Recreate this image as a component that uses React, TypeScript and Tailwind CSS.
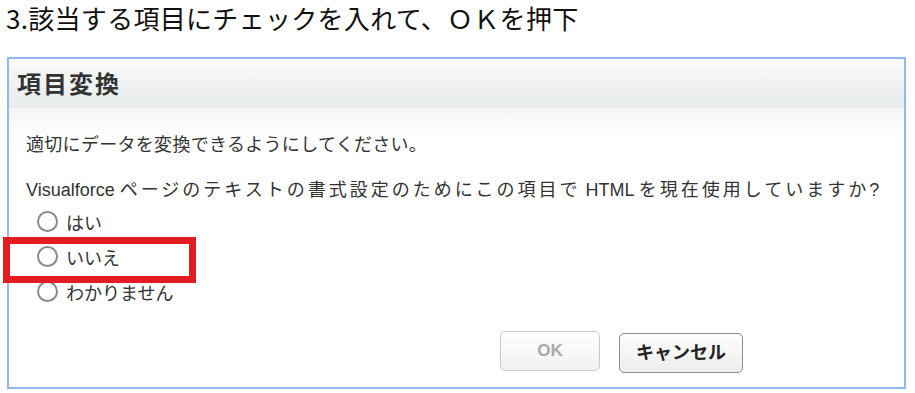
const BODY_FONT = { fontFamily: '"Liberation Sans", "Noto Sans CJK JP", sans-serif' };

const OPTIONS = ["はい", "いいえ", "わかりません"];

export default function App() {
  return (
    <div
      className="relative w-[915px] h-[393px] bg-white overflow-hidden"
      style={{ fontFamily: '"Noto Sans CJK JP", sans-serif' }}
    >
      {/* step caption */}
      <div className="h-[57px] pl-[6px] pt-[1px] text-[26px] leading-[34px] tracking-[0.3px] text-[#111]">
        3.該当する項目にチェックを入れて、ＯＫを押下
      </div>

      {/* dialog */}
      <div className="ml-[7px] w-[899px] h-[332px] border-2 border-[#94b6f2] flex flex-col">
        <div className="h-[49px] pl-[8px] pb-[2px] flex items-center bg-gradient-to-b from-[#f9fafa] to-[#e8ebeb]">
          <span className="text-[24px] font-bold text-[#333] tracking-[2px]">項目変換</span>
        </div>

        <div
          className="flex-1 flex flex-col pl-[17px] pr-[10px] text-[#333] bg-gradient-to-b from-[#f4f4f4] via-white via-[30px] to-white"
          style={BODY_FONT}
        >
          <p className="mt-[25px] text-[18px] leading-[24px] tracking-[0.3px]">
            適切にデータを変換できるようにしてください。
          </p>
          <p className="mt-[21px] text-[18px] leading-[24px]">
            Visualforce <span className="tracking-[3px]">ページのテキストの書式設定のためにこの項目で</span> HTML{" "}
            <span className="tracking-[3px]">を現在使用していますか</span>?
          </p>

          <div className="mt-[10px] flex flex-col gap-[11px] pl-[11px]">
            {OPTIONS.map((o) => (
              <label key={o} className="flex items-center gap-[8px] h-[24px]">
                <span className="w-[21px] h-[21px] rounded-full border-2 border-[#8a8a8a] bg-white shrink-0 -mt-[6px]" />
                <span className="text-[18px] leading-[24px]">{o}</span>
              </label>
            ))}
          </div>

          <div className="mt-[25px] flex items-start pl-[474px] gap-[19px]">
            <button className="w-[100px] h-[40px] rounded-[5px] border border-[#c8c8c8] bg-gradient-to-b from-white to-[#f1f1f1] text-[17px] font-bold text-[#a8a8a8]">
              OK
            </button>
            <button className="mt-[2px] w-[124px] h-[40px] rounded-[5px] border border-[#8c8c8c] bg-gradient-to-b from-white to-[#ececec] text-[18px] font-bold text-[#222]">
              キャンセル
            </button>
          </div>
        </div>
      </div>

      {/* annotation */}
      <div className="absolute left-[3px] top-[237px] w-[193px] h-[46px] border-[7px] border-[#e31b23]" />
    </div>
  );
}
